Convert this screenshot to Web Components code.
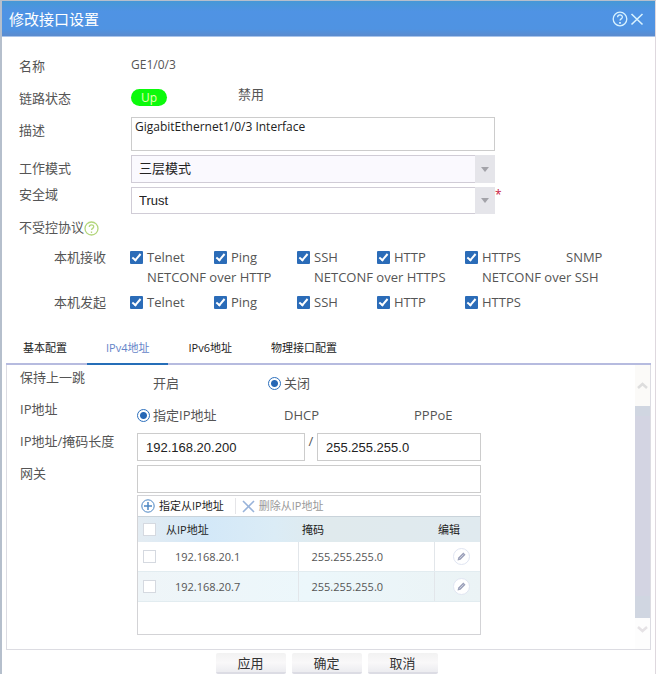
<!DOCTYPE html>
<html lang="zh-CN">
<head>
<meta charset="utf-8">
<title>修改接口设置</title>
<style>
html, body { margin: 0; }
body {
  background: #fff;
  color: #555;
  font: 13px/16px "Open Sans", "Noto Sans CJK SC", sans-serif;
}
</style>
</head>
<body>
<interface-dialog></interface-dialog>

<template id="t-header">
  <style>
    :host { display: flex; align-items: center; height: 36px; padding: 0 10px 0 7px; box-sizing: border-box;
      background: linear-gradient(#4698d6, #4f93e4 30%, #4f93e2 80%, #5b8bce); border-bottom: 1px solid #a9c4ea; color: #fff; }
    h1 { margin: 0; flex: 1; font-size: 15px; line-height: 20px; font-weight: 400; }
    button { border: 0; padding: 0; margin: 0 0 0 1px; background: none; color: #d8f2ff; height: 16px; cursor: pointer; }
    svg { display: block; }
  </style>
  <h1><slot></slot></h1>
  <button type="button" aria-label="帮助"><svg width="16" height="16" viewBox="0 0 16 16" fill="none" stroke="currentColor" stroke-width="1.3"><circle cx="8" cy="8" r="6.8"/><path d="M5.6 6.3c0-3.2 4.8-3 4.8-.3 0 1.900-2.300 1.800-2.300 3.500"/><path d="M8 11v1.700" stroke-width="1.700"/></svg></button>
  <button type="button" aria-label="关闭"><svg width="16" height="16" viewBox="0 0 16 16" fill="none" stroke="currentColor" stroke-width="1.600"><path d="M2.500 3l11 10.500M13.500 3l-11 10.500"/></svg></button>
</template>

<template id="t-row">
  <style>
    :host { display: grid; grid-template-columns: var(--label-width) minmax(0, 1fr); min-height: var(--row-height, 28px); }
    .label { line-height: var(--label-line, 26px); white-space: nowrap; }
  </style>
  <div class="label"><slot name="label"></slot></div>
  <div><slot></slot></div>
</template>

<template id="t-status">
  <style>
    :host { display: inline-block; width: 36px; height: 17px; border-radius: 9px; background: #0bfa0b; color: #e4ffb8;
      font-size: 12px; line-height: 17px; text-align: center; }
  </style>
  <slot></slot>
</template>

<template id="t-help">
  <style>:host { display: inline-block; vertical-align: middle; color: #b3d67c; } svg { display: block; }</style>
  <svg width="15" height="15" viewBox="0 0 15 15" fill="none" stroke="currentColor" stroke-width="1.300"><circle cx="7.500" cy="7.500" r="6.500"/><path d="M5.300 6c0-3 4.400-2.800 4.400-.3 0 1.700-2.100 1.600-2.100 3.200M7.500 10.500v1.500"/></svg>
</template>

<template id="t-select">
  <style>
    :host { display: block; position: relative; height: var(--select-height, 28px); }
    ::slotted(select) { appearance: none; width: 100%; height: 100%; margin: 0; padding: 0 24px 0 7px; box-sizing: border-box;
      border: 1px solid #d0ccd6; border-radius: 0; background: var(--select-bg, #fff); color: #222;
      font: 13px/16px "Liberation Sans", "Noto Sans CJK SC", sans-serif; }
    .arrow { position: absolute; top: 0; right: 0; bottom: 0; width: 20px; display: grid; place-items: center; background: #e5e5ea; pointer-events: none; }
    .required { position: absolute; left: 100%; top: 2px; color: #c81840; font-size: 12px; line-height: 12px; }
    :host(:not([required])) .required { display: none; }
  </style>
  <slot></slot>
  <span class="arrow"><svg width="8" height="5" viewBox="0 0 8 5"><path d="M0 0h8L4 5z" fill="#a3a3a9"/></svg></span>
  <span class="required">*</span>
</template>

<template id="t-check">
  <style>
    :host { display: block; white-space: nowrap; }
    label { display: flex; align-items: center; gap: 4px; line-height: 20px; }
    input { appearance: none; width: 13px; height: 13px; margin: 0; flex: none; display: grid; place-items: center; }
    input:checked { background: #2b6cb8; border-radius: 1px; }
    input:checked::after { content: ""; width: 3px; height: 7px; margin-bottom: 2px; border: solid #fff; border-width: 0 2px 2px 0; transform: rotate(40deg); }
  </style>
  <label><input type="checkbox"><slot></slot></label>
</template>

<template id="t-radio">
  <style>
    :host { display: grid; grid-template-columns: 131px 130px 1fr; align-items: center; height: 28px; }
    label { display: flex; align-items: center; gap: 3px; white-space: nowrap; }
    input { appearance: none; width: 13px; height: 13px; margin: 0; box-sizing: border-box; border-radius: 50%; }
    input:checked { border: 1px solid #2d70bd; background: radial-gradient(#2667b5 3px, #fff 4px); }
  </style>
</template>

<template id="t-tabs">
  <style>
    :host { display: flex; gap: 1px; height: 28px; border-bottom: 2px solid #b6bbdf; font-size: 11px; color: #222; }
    button { border: 0; margin: 0 0 -2px; padding: 0 19px 4px; background: none; font: inherit; color: inherit; white-space: nowrap; }
    button:first-of-type { padding-left: 17px; }
    button[aria-selected=true] { color: #6484c8; border-bottom: 2px solid #256eb8; padding-bottom: 2px; }
  </style>
</template>

<template id="t-scroll">
  <style>
    :host { display: flex; flex-direction: column; width: 15px; background: #fdfdfd; }
    .end { display: grid; place-items: center; color: #ddd; }
    .up { height: 41px; background: #fbfaf8; }
    .down { height: 31px; box-sizing: border-box; align-items: start; padding-top: 8px; color: #e5e2e5; }
    .thumb { flex: 1; background: #d3d4e2; border: solid #d0d6e1; border-width: 10px 0 22px; }
  </style>
  <div class="end up"><svg width="11" height="7" viewBox="0 0 11 7" fill="none" stroke="currentColor" stroke-width="2.500"><path d="M1 6l4.500-4L10 6"/></svg></div>
  <div class="thumb"></div>
  <div class="end down"><svg width="11" height="7" viewBox="0 0 11 7" fill="none" stroke="currentColor" stroke-width="2.500"><path d="M1 1l4.500 4L10 1"/></svg></div>
</template>

<template id="t-table">
  <style>
    :host { display: block; box-sizing: border-box; min-height: 140px; border: 1px solid #d3d3d6; font-size: 11px; }
    .tools { display: flex; align-items: center; height: 20px; padding-left: 3px; }
    .tools button { display: flex; align-items: center; gap: 4px; border: 0; padding: 0; background: none; font: inherit; color: #222; white-space: nowrap; }
    .tools button + button { margin-left: 11px; padding-left: 6px; border-left: 1px solid #e5e5e8; color: #999; }
    table { width: 100%; border-collapse: collapse; table-layout: fixed; }
    th, td { padding: 0; text-align: left; font-weight: 400; white-space: nowrap; }
    th { height: 25px; color: #222; }
    thead tr { background: linear-gradient(90deg, #e4ecf2, #d3e8f8 20%, #dbecf6 40%, #e0eaed 55%, #e0eaef); border-top: 1px solid #c9d3da; }
    td { height: 29px; border-bottom: 1px solid #e2ecf0; }
    tbody tr:nth-child(even) { background: linear-gradient(90deg, #eff5f8, #ecf7fb 50%, #ebf3f5); }
    td:nth-child(2), td:nth-child(3) { padding-left: 9px; border-right: 1px solid #e2e6ea; }
    th:nth-child(3) { padding-left: 4px; } td:nth-child(3) { padding-left: 13px; }
    th:nth-child(4) { padding-left: 4px; } td:nth-child(4) { padding-left: 18px; }
    input { appearance: none; display: block; width: 13px; height: 13px; margin: 0 0 0 5px; box-sizing: border-box; border: 1px solid #d5d9e0; background: #fff; }
    td button { display: block; border: 1px solid #e0e5f2; border-radius: 50%; width: 17px; height: 17px; padding: 1px; background: #fff; }
    svg { display: block; }
    .c1 { width: 28px; } .c4 { width: 46px; } .c2 { width: 132px; }
  </style>
  <div class="tools">
    <button type="button"><svg width="14" height="14" viewBox="0 0 14 14" fill="none" stroke="#4c86c3"><circle cx="7" cy="7" r="6.200"/><path d="M7 3v8M3 7h8" stroke-width="1.500"/></svg>指定从IP地址</button>
    <button type="button"><svg width="13" height="13" viewBox="0 0 13 13" fill="none" stroke="#98b3da" stroke-width="1.600"><path d="M1 1l11 11M12 1L1 12"/></svg>删除从IP地址</button>
  </div>
  <table>
    <colgroup><col class="c1"><col class="c2"><col><col class="c4"></colgroup>
    <thead><tr><th><input type="checkbox" aria-label="全选"></th><th>从IP地址</th><th>掩码</th><th>编辑</th></tr></thead>
    <tbody></tbody>
  </table>
</template>

<template id="t-button">
  <style>
    :host { display: block; }
    button { width: 70px; height: 21px; border: 0; border-bottom: 2px solid #dcdce4; border-radius: 2px; padding: 0;
      background: linear-gradient(#f2f2f2, #f9f8f9 50%, #ececf0); font: inherit; color: #333; }
  </style>
  <button type="button"><slot></slot></button>
</template>

<template id="t-dialog">
  <style>
    :host { display: flex; flex-direction: column; min-height: 100vh; box-sizing: border-box; border: solid #b5bfcc; border-width: 1px 1px 0 2px; border-right-color: #ded8de; overflow: hidden; }
    .frame { flex: 1; display: flex; flex-direction: column; padding: 0 4px; }
    .top { --label-width: 112px; display: grid; gap: 4px; padding: 16px 156px 0 13px; }
    .name { font-size: 12px; line-height: 24px; color: #555; }
    .state { display: grid; grid-template-columns: 107px 1fr; align-items: center; height: 24px; }
    .state span { margin-bottom: 6px; }
    textarea, input { display: block; width: 100%; box-sizing: border-box; margin: 0; border: 1px solid #ccc; border-radius: 0; background: #fff; color: #222; }
    textarea { height: 34px; resize: none; padding: 1px 3px; font: 12px/16px "Open Sans", sans-serif; overflow: hidden; }
    .mode { --select-bg: #faf9fe; }
    .zone { --label-line: 14px; --row-height: 27px; --select-height: 27px; }
    .intro { --label-line: 18px; --row-height: 18px; }
    .protocols { --label-line: 20px; display: grid; gap: 5px; padding: 11px 40px 0 48px; --label-width: 76px; --row-height: 20px; }
    .checks { display: grid; grid-template-columns: 84px 83px 80px 88px 84px 1fr; }
    .wide { grid-column: span 2; }
    settings-tabs { margin-top: 23px; }
    .panel { flex: 1; display: flex; border: 1px solid #dcdce2; border-top: 0; }
    .body { --label-width: 117px; --label-line: 16px; flex: 1; min-width: 0; display: grid; align-content: start; gap: 4px; padding: 4px 154px 8px 13px; }
    .body input { height: 28px; padding: 0 8px; font: 13px/16px "Liberation Sans", sans-serif; }
    .pair { display: grid; grid-template-columns: 168px 12px 1fr; }
    .pair span { text-align: center; }
    .gateway input { margin-bottom: 2px; }
    footer { display: flex; justify-content: center; gap: 6px; height: 21px; padding: 3px 4px 0 0; }
  </style>
  <dialog-header>修改接口设置</dialog-header>
  <div class="frame">
    <div class="top">
      <form-row><span slot="label">名称</span><div class="name">GE1/0/3</div></form-row>
      <form-row><span slot="label">链路状态</span><div class="state"><link-status>Up</link-status><span>禁用</span></div></form-row>
      <form-row><label slot="label" for="desc">描述</label><textarea id="desc">GigabitEthernet1/0/3 Interface</textarea></form-row>
      <form-row class="mode"><label slot="label" for="mode">工作模式</label><select-box><select id="mode"><option>三层模式</option></select></select-box></form-row>
      <form-row class="zone"><label slot="label" for="zone">安全域</label><select-box required><select id="zone" required><option>Trust</option></select></select-box></form-row>
      <form-row class="intro"><span slot="label">不受控协议<help-mark></help-mark></span></form-row>
    </div>
    <div class="protocols">
      <form-row role="group" aria-label="本机接收"><span slot="label">本机接收</span>
        <div class="checks">
          <check-option checked>Telnet</check-option><check-option checked>Ping</check-option><check-option checked>SSH</check-option><check-option checked>HTTP</check-option>
          <check-option checked>HTTPS</check-option>
          <check-option>SNMP</check-option>
          <check-option class="wide">NETCONF over HTTP</check-option><check-option class="wide">NETCONF over HTTPS</check-option><check-option class="wide">NETCONF over SSH</check-option>
        </div>
      </form-row>
      <form-row role="group" aria-label="本机发起"><span slot="label">本机发起</span>
        <div class="checks">
          <check-option checked>Telnet</check-option><check-option checked>Ping</check-option><check-option checked>SSH</check-option><check-option checked>HTTP</check-option><check-option checked>HTTPS</check-option>
        </div>
      </form-row>
    </div>
    <settings-tabs tabs="基本配置,IPv4地址,IPv6地址,物理接口配置" selected="1"></settings-tabs>
    <div class="panel">
      <div class="body">
        <form-row><span slot="label">保持上一跳</span><radio-set label="保持上一跳" options="开启,关闭" selected="1"></radio-set></form-row>
        <form-row><span slot="label">IP地址</span><radio-set label="IP地址" options="指定IP地址,DHCP,PPPoE" selected="0"></radio-set></form-row>
        <form-row><label slot="label" for="ip">IP地址/掩码长度</label><div class="pair"><input id="ip" value="192.168.20.200"><span>/</span><input aria-label="掩码" value="255.255.255.0"></div></form-row>
        <form-row class="gateway"><label slot="label" for="gateway">网关</label><input id="gateway"><address-table></address-table></form-row>
      </div>
      <scroll-rail aria-hidden="true"></scroll-rail>
    </div>
    <footer><push-button>应用</push-button><push-button>确定</push-button><push-button>取消</push-button></footer>
  </div>
</template>

<script>
function define(name, templateId, setup) {
  customElements.define(name, class extends HTMLElement {
    constructor() {
      super();
      this.attachShadow({ mode: "open" }).append(document.getElementById(templateId).content.cloneNode(true));
    }
    connectedCallback() {
      if (setup && !this.ready) { this.ready = true; setup(this, this.shadowRoot); }
    }
  });
}
define("dialog-header", "t-header");
define("form-row", "t-row");
define("link-status", "t-status");
define("help-mark", "t-help");
define("select-box", "t-select");
define("check-option", "t-check", (host, root) => {
  root.querySelector("input").checked = host.hasAttribute("checked");
});
define("radio-set", "t-radio", (host, root) => {
  host.setAttribute("role", "radiogroup");
  host.setAttribute("aria-label", host.getAttribute("label"));
  host.getAttribute("options").split(",").forEach((text, i) => {
    const label = document.createElement("label");
    const input = document.createElement("input");
    input.type = "radio";
    input.name = "choice";
    input.checked = i === Number(host.getAttribute("selected"));
    label.append(input, text);
    root.append(label);
  });
});
define("settings-tabs", "t-tabs", (host, root) => {
  host.setAttribute("role", "tablist");
  host.getAttribute("tabs").split(",").forEach((text, i) => {
    const tab = document.createElement("button");
    tab.type = "button";
    tab.setAttribute("role", "tab");
    tab.setAttribute("aria-selected", String(i === Number(host.getAttribute("selected"))));
    tab.textContent = text;
    tab.onclick = () => root.querySelectorAll("button").forEach(b => b.setAttribute("aria-selected", String(b === tab)));
    root.append(tab);
  });
});
define("scroll-rail", "t-scroll");
define("address-table", "t-table", (host, root) => {
  const rows = [["192.168.20.1", "255.255.255.0"], ["192.168.20.7", "255.255.255.0"]];
  root.querySelector("tbody").innerHTML = rows.map(([ip, mask]) => `<tr>
    <td><input type="checkbox" aria-label="${ip}"></td><td>${ip}</td><td>${mask}</td>
    <td><button type="button" aria-label="编辑 ${ip}"><svg width="13" height="13" viewBox="0 0 13 13"><path d="M2.500 10.500l.8-3 5-5 2.200 2.200-5 5z" fill="#9a9fb8"/><path d="M4.500 8.500l4-4" stroke="#dfe2ee" stroke-width=".7"/></svg></button></td></tr>`).join("");
});
define("push-button", "t-button");
define("interface-dialog", "t-dialog");
</script>
</body>
</html>
